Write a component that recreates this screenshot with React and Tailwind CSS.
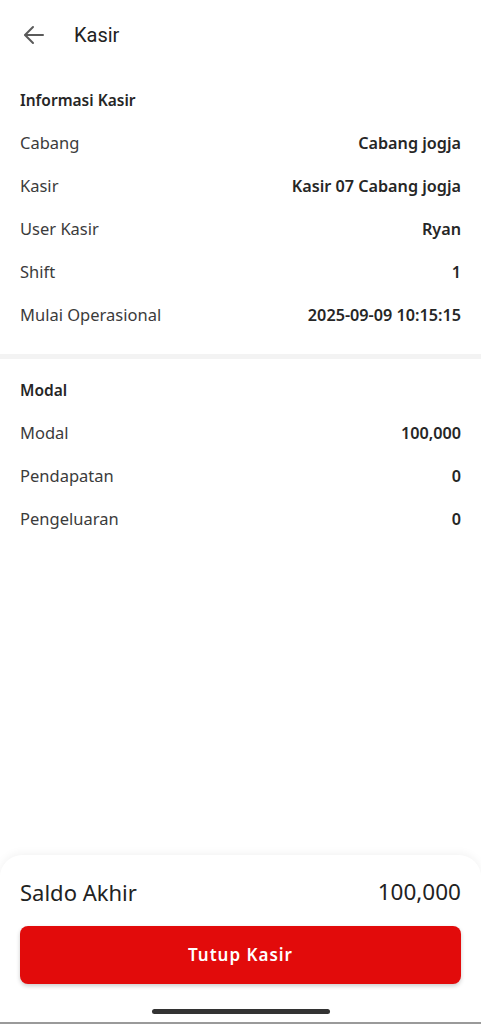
import React from "react";

const info = [
  { label: "Cabang", value: "Cabang jogja" },
  { label: "Kasir", value: "Kasir 07 Cabang jogja" },
  { label: "User Kasir", value: "Ryan" },
  { label: "Shift", value: "1" },
  { label: "Mulai Operasional", value: "2025-09-09 10:15:15" },
];

const modal = [
  { label: "Modal", value: "100,000" },
  { label: "Pendapatan", value: "0" },
  { label: "Pengeluaran", value: "0" },
];

const Row = ({ label, value }) => (
  <div className="h-[43px] flex items-center justify-between">
    <p className="text-[16.5px] text-[#3b3b3b]">{label}</p>
    <p className="text-[16.2px] font-semibold text-[#262626]">{value}</p>
  </div>
);

const App = () => {
  return (
    <div
      className="min-h-screen flex flex-col bg-white"
      style={{ fontFamily: "'Noto Sans', sans-serif" }}
    >
      {/* header */}
      <div className="h-[70px] flex items-center px-[22px] gap-[28px]">
        <svg width="24" height="24" viewBox="0 0 24 24" fill="none" stroke="#5a5a5a" strokeWidth="2" strokeLinecap="round" strokeLinejoin="round">
          <path d="M21 12H3.5" />
          <path d="M11 4l-8 8 8 8" />
        </svg>
        <h1 className="text-[20px] text-[#222]" style={{ fontFamily: "Roboto, sans-serif" }}>Kasir</h1>
      </div>

      {/* informasi kasir */}
      <div className="px-5 pt-[10px] pb-[17px]">
        <div className="h-[42px] flex items-center">
          <h2 className="text-[15.5px] font-semibold text-[#262626]">Informasi Kasir</h2>
        </div>
        {info.map((item, i) => (
          <Row key={i} label={item.label} value={item.value} />
        ))}
      </div>

      <div className="h-[5px] bg-[#f3f3f3]" />

      {/* modal */}
      <div className="px-5 pt-[11px]">
        <div className="h-[42px] flex items-center">
          <h2 className="text-[15.5px] font-semibold text-[#262626]">Modal</h2>
        </div>
        {modal.map((item, i) => (
          <Row key={i} label={item.label} value={item.value} />
        ))}
      </div>

      {/* bottom sheet */}
      <div className="mt-auto rounded-t-[22px] bg-white shadow-[0_-2px_8px_rgba(0,0,0,0.05)] px-5 pt-[20px]">
        <div className="flex items-center justify-between h-[34px]">
          <p className="text-[22px] text-[#222]">Saldo Akhir</p>
          <p className="text-[22.5px] text-[#222]">100,000</p>
        </div>
        <button className="mt-[17px] w-full h-[58px] rounded-[8px] bg-[#e20b0b] text-white text-[17px] font-semibold tracking-[1px] shadow-[0_2px_4px_rgba(0,0,0,0.2)]">
          Tutup Kasir
        </button>
        <div className="h-[38px] flex items-end justify-center pb-[8px]">
          <div className="w-[178px] h-[5px] rounded-full bg-[#333]" />
        </div>
      </div>
      <div className="h-[2px] bg-[#9a9a9a]" />
    </div>
  );
};

export default App;
